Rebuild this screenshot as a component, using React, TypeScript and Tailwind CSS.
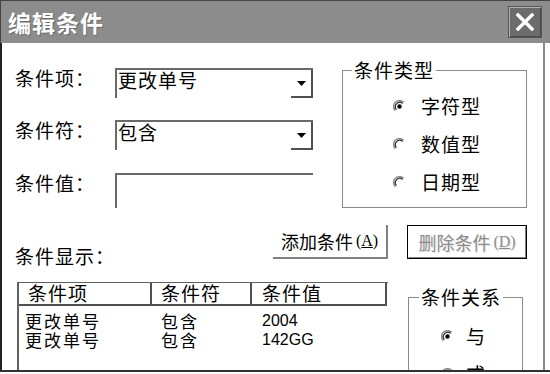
import React from "react";

const font = "font-['Noto_Sans_CJK_SC','Noto_Sans',sans-serif]";

function Radio({ checked }: { checked?: boolean }) {
  return (
    <svg width="13" height="13" viewBox="0 0 13 13" className="shrink-0">
      <path d="M2.3 10.7 A5.9 5.9 0 0 1 10.7 2.3" fill="none" stroke="#8a8a8a" strokeWidth="1.4" />
      <path d="M3.4 9.6 A4.4 4.4 0 0 1 9.6 3.4" fill="none" stroke="#2a2a2a" strokeWidth="1.3" />
      {checked && <circle cx="6.5" cy="6.5" r="2.2" fill="#000" />}
    </svg>
  );
}

function Combo({ value }: { value: string }) {
  return (
    <div className="flex h-[30px] w-[198px] border-t-2 border-l-2 border-[#6a6a6a] bg-white">
      <div className="flex-1 pl-[1px] text-[19px] leading-[20px] tracking-[1px] text-black">{value}</div>
      <div className="flex w-[22px] items-center justify-center border-r-2 border-b-2 border-[#505050]">
        <svg width="9" height="5" viewBox="0 0 9 5">
          <path d="M0 0 H9 L4.5 5 Z" fill="#000" />
        </svg>
      </div>
    </div>
  );
}

function Row({ label, children, className = "" }: { label: string; children: React.ReactNode; className?: string }) {
  return (
    <div className={`flex items-start ${className}`}>
      <div className="w-[100px] text-[19px] leading-[20px] tracking-[1px] text-black">{label}</div>
      {children}
    </div>
  );
}

export default function App() {
  return (
    <div className={`h-[374px] w-[550px] overflow-hidden bg-white ${font}`}>
      <div className="flex h-[372px] flex-col overflow-hidden border-b-2 border-[#333]">
        {/* Title bar */}
        <div className="flex h-[43px] shrink-0 items-center justify-between border-t border-l border-[#444] bg-[#8c8c8c] pl-[7px] pr-[8px]">
          <div className="text-[23px] font-bold leading-none tracking-[1px] text-white [text-shadow:1px_1px_0_#6a6a6a]">编辑条件</div>
          <div className="flex h-[32px] w-[34px] items-center justify-center border border-[#555] bg-[#6c6c6c] shadow-[inset_1px_1px_0_#b0b0b0,inset_-1px_-1px_0_#4a4a4a]">
            <svg width="18" height="18" viewBox="0 0 18 18">
              <path d="M2 2 L16 16 M16 2 L2 16" stroke="#fff" strokeWidth="3.4" strokeLinecap="square" />
            </svg>
          </div>
        </div>

        {/* Body */}
        <div className="flex flex-1">
          <div className="w-[545px] border-l-2 border-r-2 border-l-[#222] border-r-[#8a8a8a] pl-[13px] text-black">
            {/* Top section */}
            <div className="flex items-start">
              <div className="flex w-[298px] flex-col pt-[25px]">
                <Row label="条件项：">
                  <Combo value="更改单号" />
                </Row>
                <Row label="条件符：" className="mt-[22px]">
                  <Combo value="包含" />
                </Row>
                <Row label="条件值：" className="mt-[23px]">
                  <div className="h-[35px] w-[198px] border-t-2 border-l-2 border-[#6a6a6a] bg-white" />
                </Row>
              </div>
              <fieldset className="ml-[29px] mt-[16px] h-[149px] w-[185px] border border-[#8a8a8a]">
                <legend className="ml-[9px] bg-white px-[2px] text-[19px] leading-[22px] tracking-[1px]">条件类型</legend>
                <div className="flex flex-col pt-[6px]">
                  {[
                    ["字符型", true],
                    ["数值型", false],
                    ["日期型", false],
                  ].map(([t, c]) => (
                    <div key={t as string} className="flex h-[38px] items-center pl-[50px]">
                      <Radio checked={c as boolean} />
                      <span className="ml-[15px] text-[19px] leading-[20px] tracking-[1px]">{t as string}</span>
                    </div>
                  ))}
                </div>
              </fieldset>
            </div>

            {/* Button row */}
            <div className="mt-[17px] flex items-start">
              <div className="mt-[21px] w-[258px] text-[19px] leading-[20px] tracking-[1px]">条件显示：</div>
              <div className="flex h-[34px] w-[115px] items-center justify-center border-r-2 border-b-2 border-[#808080] bg-white">
                <span className="text-[18px] leading-[20px]">添加条件</span>
                <span className="ml-[3px] font-['Liberation_Serif',serif] text-[16px] leading-[20px]">
                  (<span className="underline">A</span>)
                </span>
              </div>
              <div className="ml-[19px] h-[34px] w-[120px] border border-black bg-white">
                <div className="flex h-full w-full items-center justify-center border border-t-white border-l-white border-r-[#808080] border-b-[#808080] text-[#8c8c8c] [text-shadow:1px_1px_0_#e8e8e8]">
                  <span className="text-[18px] leading-[20px]">删除条件</span>
                  <span className="ml-[3px] font-['Liberation_Serif',serif] text-[16px] leading-[20px]">
                    (<span className="underline">D</span>)
                  </span>
                </div>
              </div>
            </div>

            {/* Bottom section */}
            <div className="mt-[16px] flex items-start">
              <div className="ml-[2px] h-[120px] w-[371px] border-t border-l-2 border-[#606060] bg-white">
                <div className="flex h-[23px] text-[19px] leading-[20px] tracking-[1px]">
                  <div className="w-[133px] border-r-2 border-b-2 border-[#505050] pl-[9px]">条件项</div>
                  <div className="w-[100px] border-r-2 border-b-2 border-[#505050] pl-[9px]">条件符</div>
                  <div className="w-[135px] border-r-2 border-b-2 border-[#505050] pl-[10px]">条件值</div>
                </div>
                <div className="flex flex-col pt-[5px] text-[17px] leading-[19px] tracking-[2px]">
                  {[
                    ["更改单号", "包含", "2004"],
                    ["更改单号", "包含", "142GG"],
                  ].map((r, i) => (
                    <div key={i} className="flex h-[19px] items-center">
                      <div className="w-[133px] pl-[6px]">{r[0]}</div>
                      <div className="w-[100px] pl-[9px]">{r[1]}</div>
                      <div className="pl-[10px] font-['Liberation_Sans',sans-serif] text-[16px] tracking-normal">{r[2]}</div>
                    </div>
                  ))}
                </div>
              </div>
              <fieldset className="ml-[20px] mt-[4px] h-[120px] w-[115px] border border-[#8a8a8a]">
                <legend className="ml-[10px] bg-white px-[2px] text-[19px] leading-[22px] tracking-[1px]">条件关系</legend>
                <div className="flex flex-col pt-[9px]">
                  {[
                    ["与", true],
                    ["或", false],
                  ].map(([t, c]) => (
                    <div key={t as string} className="flex h-[38px] items-center pl-[32px]">
                      <Radio checked={c as boolean} />
                      <span className="ml-[12px] text-[19px] leading-[20px]">{t as string}</span>
                    </div>
                  ))}
                </div>
              </fieldset>
            </div>
          </div>
        </div>
      </div>
    </div>
  );
}
